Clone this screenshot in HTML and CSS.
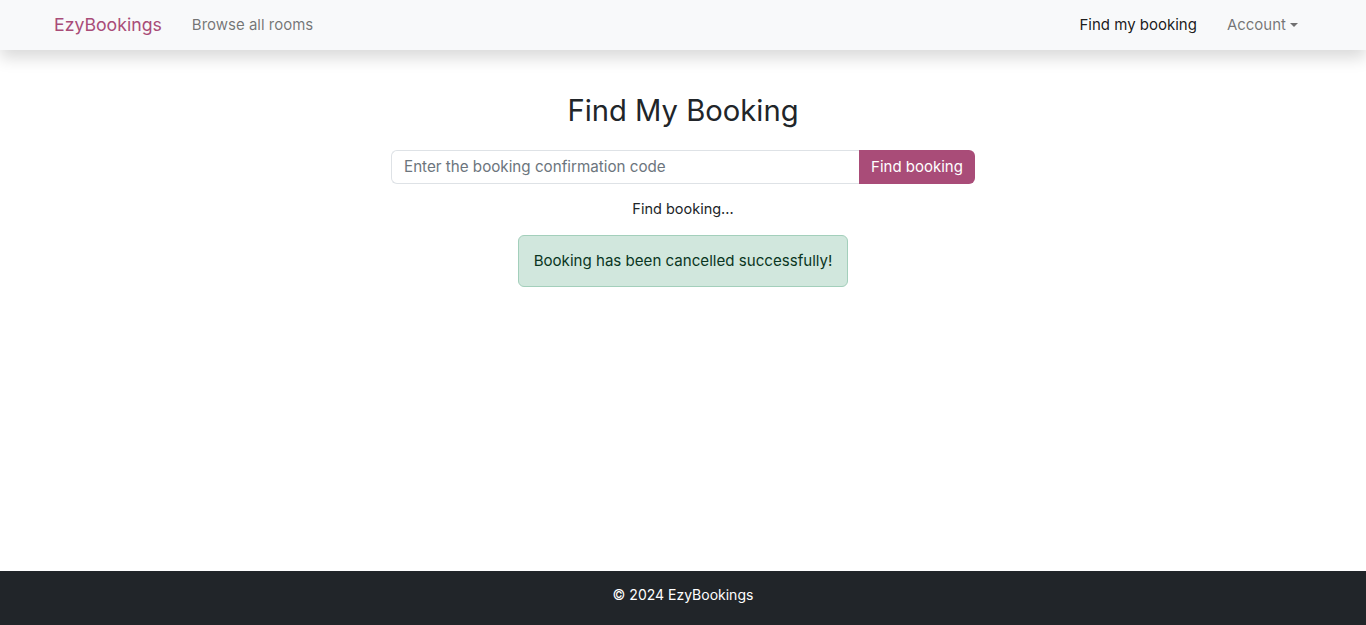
FILE: index.html
```html
<!DOCTYPE html>
<html lang="en">
<head>
<meta charset="utf-8">
<title>EzyBookings</title>
<link rel="stylesheet" href="styles.css">
</head>
<body>
<div class="page">
  <nav class="navbar">
    <div class="nav-left">
      <a class="brand" href="#">EzyBookings</a>
      <a class="nav-link" href="#">Browse all rooms</a>
    </div>
    <div class="nav-right">
      <a class="nav-link active" href="#">Find my booking</a>
      <a class="nav-link dropdown" href="#">Account<span class="caret"></span></a>
    </div>
  </nav>
  <main class="main">
    <h2 class="title">Find My Booking</h2>
    <form class="input-group">
      <input class="form-control" type="text" placeholder="Enter the booking confirmation code">
      <button class="btn" type="button">Find booking</button>
    </form>
    <p class="status">Find booking...</p>
    <div class="alert">Booking has been cancelled successfully!</div>
  </main>
  <footer class="footer">© 2024 EzyBookings</footer>
</div>
</body>
</html>
```
FILE: styles.css
```css
* { box-sizing: border-box; }
html, body { margin: 0; padding: 0; }
body {
  font-family: "Inter", "Open Sans", sans-serif;
  color: #212529;
  background: #fff;
  font-size: 15px;
}
.page {
  min-height: 100vh;
  display: flex;
  flex-direction: column;
}
.navbar {
  height: 50px;
  background: #f8f9fa;
  box-shadow: 0 8px 16px rgba(0,0,0,0.15);
  display: flex;
  align-items: center;
  justify-content: space-between;
  padding: 0 60px 2px 54px;
  position: relative;
  z-index: 1;
}
.nav-left, .nav-right {
  display: flex;
  align-items: center;
}
.brand {
  color: #a94c78;
  font-size: 17.7px;
  text-decoration: none;
  margin-right: 22px;
}
.nav-link {
  color: rgba(0,0,0,0.55);
  text-decoration: none;
  font-size: 15px;
  padding: 8px;
}
.nav-link.active { color: rgba(0,0,0,0.9); margin-right: 14px; }
.caret {
  display: inline-block;
  width: 0; height: 0;
  margin-left: 4px;
  vertical-align: 3px;
  border-top: 4px solid currentColor;
  border-left: 4px solid transparent;
  border-right: 4px solid transparent;
}
.main {
  flex: 1;
  display: flex;
  flex-direction: column;
  align-items: center;
  padding-top: 39px;
}
.title {
  margin: 0 0 17px;
  font-weight: 400;
  font-size: 29.2px;
  line-height: 44px;
  height: 44px;
}
.input-group {
  display: flex;
  width: 584px;
  height: 34px;
  margin: 0;
}
.form-control {
  flex: 1;
  min-width: 0;
  border: 1px solid #dee2e6;
  border-right: none;
  border-radius: 6px 0 0 6px;
  padding: 0 12px 2px;
  font: inherit;
  font-size: 15.2px;
  color: #212529;
  outline: none;
}
.form-control::placeholder { color: #6c757d; }
.btn {
  width: 116px;
  border: none;
  border-radius: 0 6px 6px 0;
  background: #a94c78;
  color: #fff;
  font: inherit;
  font-size: 15px;
  padding: 0 0 2px;
}
.status {
  margin: 15px 0 0;
  line-height: 20px;
  font-size: 14.5px;
}
.alert {
  margin-top: 16px;
  width: 330px;
  height: 52px;
  display: flex;
  align-items: center;
  justify-content: center;
  background: #d1e7dd;
  border: 1px solid #a3cfbb;
  border-radius: 6px;
  color: #0a3622;
  font-size: 15.1px;
  padding-bottom: 2px;
}
.footer {
  height: 54px;
  background: #212529;
  color: #fff;
  display: flex;
  align-items: center;
  justify-content: center;
  font-size: 14px;
  padding-bottom: 8px;
}
```
